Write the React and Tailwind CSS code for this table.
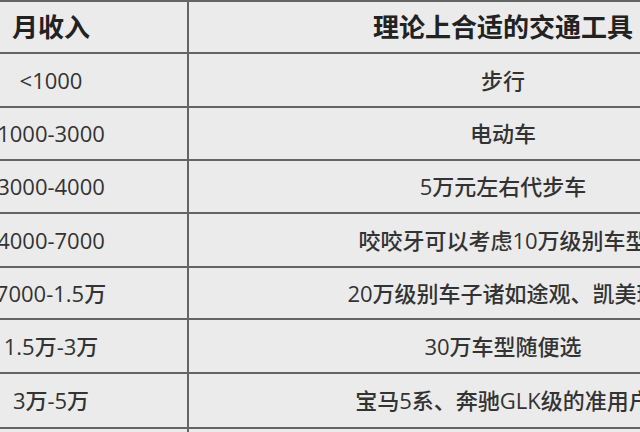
import React from 'react';

const rows = [
  { income: '<1000', tool: '步行', h: 'h-[52px]' },
  { income: '1000-3000', tool: '电动车', h: 'h-[51px]' },
  { income: '3000-4000', tool: '5万元左右代步车', h: 'h-[51px]' },
  { income: '4000-7000', tool: '咬咬牙可以考虑10万级别车型', h: 'h-[52px]' },
  { income: '7000-1.5万', tool: '20万级别车子诸如途观、凯美瑞', h: 'h-[50px]' },
  { income: '1.5万-3万', tool: '30万车型随便选', h: 'h-[52px]' },
  { income: '3万-5万', tool: '宝马5系、奔驰GLK级的准用户', h: 'h-[53px]' },
  { income: '5万以上', tool: '随意', h: 'h-[52px]' },
];

const font = { fontFamily: '"Open Sans", "Noto Sans CJK SC", sans-serif' };

export default function App() {
  return (
    <div className="w-[640px] h-[432px] overflow-hidden bg-[#ebebeb]" style={font}>
      <div className="ml-[-85px] w-[905px] border-t-2 border-[#646464]">
        <div className="flex h-[52px] border-b-2 border-[#646464] text-[26px] font-bold text-[#222]">
          <div className="w-[274px] flex items-center justify-center border-r-2 border-[#646464]">月收入</div>
          <div className="w-[628px] flex items-center justify-center">理论上合适的交通工具</div>
        </div>
        {rows.map((r) => (
          <div key={r.income} className={`flex ${r.h} box-content border-b-2 border-[#646464] text-[22px] font-medium text-[#333]`}>
            <div className="w-[274px] flex items-center justify-center border-r-2 border-[#646464] whitespace-nowrap">{r.income}</div>
            <div className="w-[628px] flex items-center justify-center whitespace-nowrap">{r.tool}</div>
          </div>
        ))}
      </div>
    </div>
  );
}
